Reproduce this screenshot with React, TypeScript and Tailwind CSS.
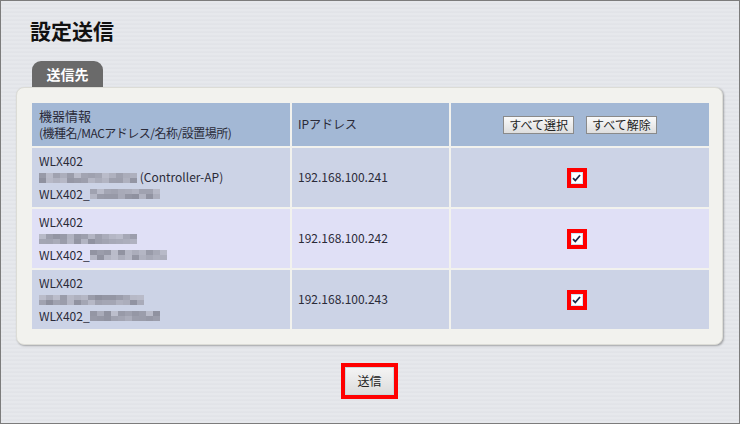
import React from "react";

type Device = {
  model: string;
  macWidth: number;
  nameWidth: number;
  seed: number;
  suffix?: string;
  ip: string;
};

const devices: Device[] = [
  { model: "WLX402", macWidth: 97, nameWidth: 72, seed: 3, suffix: " (Controller-AP)", ip: "192.168.100.241" },
  { model: "WLX402", macWidth: 98, nameWidth: 74, seed: 11, ip: "192.168.100.242" },
  { model: "WLX402", macWidth: 102, nameWidth: 69, seed: 29, ip: "192.168.100.243" },
];

// pixelated stand-in for the blurred MAC address / name
function Mosaic({ width, seed }: { width: number; seed: number }) {
  const cols = Math.round(width / 7);
  let s = seed * 9301 + 49297;
  const next = () => {
    s = (s * 9301 + 49297) % 233280;
    return s / 233280;
  };
  const cells: string[] = [];
  for (let i = 0; i < cols * 2; i++) {
    const g = 142 + Math.round(next() * 46);
    cells.push(`rgb(${g},${g + 2},${g + 16})`);
  }
  return (
    <span
      className="inline-grid align-middle"
      style={{ gridTemplateColumns: `repeat(${cols}, 7px)`, gridTemplateRows: "5px 5px" }}
    >
      {cells.map((c, i) => (
        <span key={i} style={{ backgroundColor: c }} />
      ))}
    </span>
  );
}

function CheckMark() {
  return (
    <span className="mr-[7px] inline-flex bg-[#ff0000] p-[4px]">
      <span className="flex h-[12px] w-[12px] items-center justify-center border border-[#cfe3f3] bg-white">
        <svg width="9" height="8" viewBox="0 0 9 8">
          <path d="M1 4.2 L3.3 6.5 L8 1" fill="none" stroke="#1c2a4a" strokeWidth="1.8" />
        </svg>
      </span>
    </span>
  );
}

function SmallButton({ label }: { label: string }) {
  return (
    <button
      type="button"
      className="h-[18px] border border-[#8a8a8a] bg-[linear-gradient(#fafafa,#dedede)] px-[5px] text-[12px] leading-[14px] text-[#222]"
    >
      {label}
    </button>
  );
}

export default function App() {
  const font = { fontFamily: '"Noto Sans CJK JP", "Noto Sans", sans-serif' };

  return (
    <div
      className="flex h-[424px] w-[740px] flex-col border border-[#7c7c7c] bg-[repeating-linear-gradient(180deg,#e6e8ec_0px,#e6e8ec_2px,#dfe1e6_3px,#e4e6ea_4px)] pl-[15px] pt-[15px] text-[#2a2a38]"
      style={font}
    >
      <h1 className="ml-[14px] text-[21px] font-bold leading-[28px] text-[#111]">設定送信</h1>

      <div className="ml-[16px] mt-[17px] flex h-[26px] w-[71px] items-center justify-center rounded-t-[9px] bg-[#6a6a6a] text-[14px] font-bold text-white">
        送信先
      </div>

      <section className="w-[707px] rounded-[8px] border border-[#dcdcd6] bg-[#f2f2ee] p-[15px] shadow-[1px_1px_2px_rgba(0,0,0,0.3)]">
        <div className="grid grid-cols-[258px_157px_258px] gap-[2px] text-[12px] leading-[16.5px]">
          <div className="flex h-[43px] flex-col justify-center bg-[#a3b8d5] pl-[7px]">
            <span className="text-[13px]">機器情報</span>
            <span className="tracking-[-0.5px]">(機種名/MACアドレス/名称/設置場所)</span>
          </div>
          <div className="flex h-[43px] items-center bg-[#a3b8d5] pl-[6px]">IPアドレス</div>
          <div className="flex h-[43px] items-center justify-center gap-[12px] bg-[#a3b8d5]">
            <SmallButton label="すべて選択" />
            <SmallButton label="すべて解除" />
          </div>

          {devices.map((d, i) => {
            const bg = i % 2 === 1 ? "bg-[#e0e0f6]" : "bg-[#ccd3e6]";
            return (
              <React.Fragment key={d.ip}>
                <div className={`flex h-[59px] flex-col justify-center pl-[7px] ${bg}`}>
                  <span>{d.model}</span>
                  <span className="flex h-[16.5px] items-center">
                    <Mosaic width={d.macWidth} seed={d.seed} />
                    {d.suffix && <span className="whitespace-pre">{d.suffix}</span>}
                  </span>
                  <span className="flex items-center">
                    <span>{d.model}_</span>
                    <Mosaic width={d.nameWidth} seed={d.seed + 5} />
                  </span>
                </div>
                <div className={`flex h-[59px] items-center pl-[6px] ${bg}`}>{d.ip}</div>
                <div className={`flex h-[59px] items-center justify-center ${bg}`}>
                  <CheckMark />
                </div>
              </React.Fragment>
            );
          })}
        </div>
      </section>

      <div className="mt-[18px] flex w-[707px] justify-center">
        <span className="inline-flex bg-[#ff0000] p-[4px]">
          <button
            type="button"
            className="h-[28px] w-[49px] border border-[#c8d8dc] bg-[linear-gradient(#f4f4f4,#dcdcdc)] text-[12px] text-[#222]"
          >
            送信
          </button>
        </span>
      </div>
    </div>
  );
}
